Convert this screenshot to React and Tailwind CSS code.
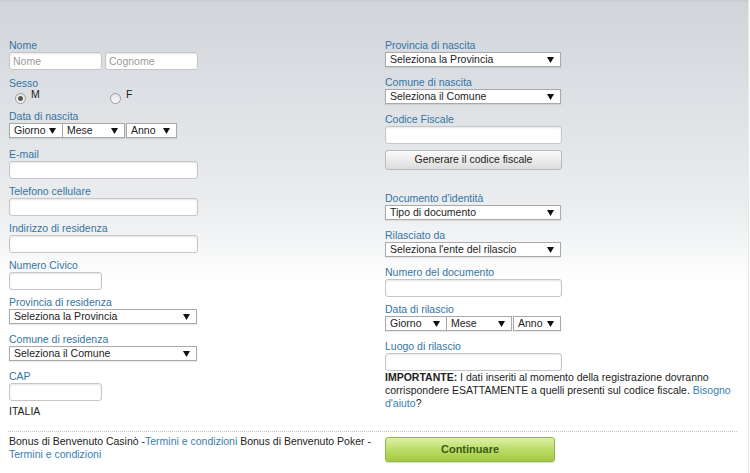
import React from "react";

const labelCls = "block h-[13px] leading-[13px] text-[10.5px] text-[#3474a3]";

function Arrow() {
  return (
    <svg width="7" height="6" viewBox="0 0 7 6" className="shrink-0">
      <path d="M0 0 H7 L3.5 6 Z" fill="#111" />
    </svg>
  );
}

function Select({ text, className }) {
  return (
    <div
      className={
        "flex h-[15px] items-center justify-between border border-[#a9a9a9] bg-white pl-[4px] pr-[6px] text-[10.5px] leading-none text-[#222] shadow-[0_1px_1px_rgba(0,0,0,0.08)] " +
        className
      }
    >
      <span>{text}</span>
      <Arrow />
    </div>
  );
}

function TextInput({ className, placeholder }) {
  return (
    <input
      type="text"
      placeholder={placeholder}
      className={
        "block h-[18px] rounded-[3px] border border-[#c6c6c6] bg-white px-[3px] text-[10.5px] text-[#222] shadow-[inset_0_1px_2px_rgba(0,0,0,0.1)] outline-none placeholder:text-[#9a9a9a] " +
        className
      }
    />
  );
}

function Field({ label, h, children }) {
  return (
    <div className={h}>
      <span className={labelCls}>{label}</span>
      {children}
    </div>
  );
}

function Radio({ checked, label }) {
  return (
    <div className="flex items-start">
      <div className="mt-[3px] flex h-[11px] w-[11px] items-center justify-center rounded-full border border-[#9c9c9c] bg-gradient-to-b from-[#e4e4e4] to-[#fafafa]">
        {checked && <div className="h-[5px] w-[5px] rounded-full bg-[#555]" />}
      </div>
      <span className="ml-[5px] text-[10.5px] leading-[9px] text-[#222]">{label}</span>
    </div>
  );
}

export default function App() {
  return (
    <div className="min-h-[473px] w-[749px] border-r border-[#e2e4e6] bg-gradient-to-b from-[#d1d5da] via-[#eceef0] via-45% to-white to-60% font-['Liberation_Sans',Arial,sans-serif]">
      <div className="h-[2px] w-full bg-[#c9cdd2]" />
      <div className="grid grid-cols-[376px_1fr] pl-[9px] pt-[37px]">
        {/* colonna sinistra */}
        <div>
          <Field label="Nome" h="h-[38px]">
            <div className="flex gap-[3px]">
              <TextInput className="w-[93px]" placeholder="Nome" />
              <TextInput className="w-[93px]" placeholder="Cognome" />
            </div>
          </Field>
          <Field label="Sesso" h="h-[33px]">
            <div className="flex pl-[6px]">
              <div className="w-[95px]">
                <Radio checked label="M" />
              </div>
              <Radio label="F" />
            </div>
          </Field>
          <Field label="Data di nascita" h="h-[38px]">
            <div className="flex">
              <Select text="Giorno" className="w-[54px]" />
              <Select text="Mese" className="-ml-px w-[63px]" />
              <Select text="Anno" className="ml-[1px] w-[51px]" />
            </div>
          </Field>
          <Field label="E-mail" h="h-[37px]">
            <TextInput className="w-[189px]" />
          </Field>
          <Field label="Telefono cellulare" h="h-[37px]">
            <TextInput className="w-[189px]" />
          </Field>
          <Field label="Indirizzo di residenza" h="h-[37px]">
            <TextInput className="w-[189px]" />
          </Field>
          <Field label="Numero Civico" h="h-[37px]">
            <TextInput className="w-[93px]" />
          </Field>
          <Field label="Provincia di residenza" h="h-[37px]">
            <Select text="Seleziona la Provincia" className="w-[188px]" />
          </Field>
          <Field label="Comune di residenza" h="h-[37px]">
            <Select text="Seleziona il Comune" className="w-[188px]" />
          </Field>
          <Field label="CAP" h="h-[35px]">
            <TextInput className="w-[93px]" />
          </Field>
          <div className="h-[13px] text-[10.5px] leading-[13px] text-[#222]">ITALIA</div>
        </div>

        {/* colonna destra */}
        <div>
          <Field label="Provincia di nascita" h="h-[37px]">
            <Select text="Seleziona la Provincia" className="w-[176px]" />
          </Field>
          <Field label="Comune di nascita" h="h-[37px]">
            <Select text="Seleziona il Comune" className="w-[176px]" />
          </Field>
          <Field label="Codice Fiscale" h="h-[79px]">
            <TextInput className="w-[177px]" />
            <button className="mt-[6px] block h-[20px] w-[177px] rounded-[3px] border border-[#b9b9b9] bg-gradient-to-b from-[#fbfbfb] to-[#dcdcdc] text-[10.5px] text-[#222]">
              Generare il codice fiscale
            </button>
          </Field>
          <Field label="Documento d'identità" h="h-[37px]">
            <Select text="Tipo di documento" className="w-[176px]" />
          </Field>
          <Field label="Rilasciato da" h="h-[37px]">
            <Select text="Seleziona l'ente del rilascio" className="w-[176px]" />
          </Field>
          <Field label="Numero del documento" h="h-[37px]">
            <TextInput className="w-[177px]" />
          </Field>
          <Field label="Data di rilascio" h="h-[37px]">
            <div className="flex">
              <Select text="Giorno" className="w-[62px]" />
              <Select text="Mese" className="-ml-px w-[66px]" />
              <Select text="Anno" className="ml-[1px] w-[48px]" />
            </div>
          </Field>
          <div>
            <span className={labelCls}>Luogo di rilascio</span>
            <TextInput className="w-[177px]" />
            <p className="w-[352px] text-[10.5px] leading-[13px] text-[#222]">
              <b>IMPORTANTE:</b> I dati inseriti al momento della registrazione dovranno corrispondere
              ESATTAMENTE a quelli presenti sul codice fiscale.{" "}
              <a className="text-[#3a7db3]">Bisogno d'aiuto</a>?
            </p>
          </div>
        </div>
      </div>

      {/* footer */}
      <div className="ml-[8px] mt-[13px] w-[729px] border-t border-dotted border-[#c4c4c4]" />
      <div className="flex pl-[9px] pt-[3px]">
        <p className="w-[366px] text-[10.5px] leading-[13px] text-[#222]">
          Bonus di Benvenuto Casinò -<a className="text-[#3a7db3]">Termini e condizioni</a> Bonus di
          Benvenuto Poker - <a className="text-[#3a7db3]">Termini e condizioni</a>
        </p>
        <button className="ml-[10px] mt-[2px] h-[25px] w-[170px] rounded-[3px] border border-[#93b84a] bg-gradient-to-b from-[#dff0a6] via-[#bcdc68] to-[#a3cb3f] text-[11px] font-bold text-[#3a5b12] shadow-[0_1px_1px_rgba(0,0,0,0.15)]">
          Continuare
        </button>
      </div>
    </div>
  );
}
